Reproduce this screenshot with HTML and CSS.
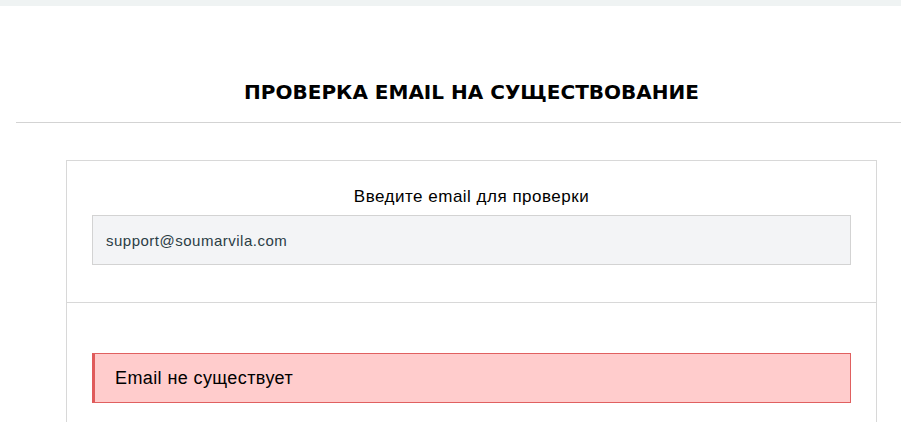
FILE: index.html
```html
<!DOCTYPE html>
<html lang="ru">
<head>
<meta charset="utf-8">
<title>Проверка email</title>
<link rel="stylesheet" href="styles.css">
</head>
<body>
<div class="topbar"></div>
<div class="page">
  <h1 class="title">ПРОВЕРКА EMAIL НА СУЩЕСТВОВАНИЕ</h1>
  <div class="card">
    <div class="card-section form-section">
      <label class="label" for="email">Введите email для проверки</label>
      <input class="input" id="email" type="text" value="support@soumarvila.com">
    </div>
    <div class="card-section result-section">
      <div class="alert">Email не существует</div>
    </div>
  </div>
</div>
</body>
</html>
```

FILE: styles.css
```css
html, body {
  margin: 0;
  padding: 0;
  overflow-x: hidden;
  background: #ffffff;
  font-family: "Liberation Sans", Arial, sans-serif;
}
.topbar {
  height: 6px;
  background: #eff3f3;
}
.page {
  margin-left: 16px;
  width: 911px;
}
.title {
  margin: 0;
  padding-top: 75px;
  padding-bottom: 19px;
  border-bottom: 1px solid #d3d3d3;
  text-align: center;
  font-family: "DejaVu Sans", Verdana, sans-serif;
  font-weight: bold;
  font-size: 20px;
  line-height: 22px;
  color: #000;
}
.card {
  margin: 37px 50px 0;
  border: 1px solid #d8d8d8;
  border-bottom: none;
}
.card-section {
  padding: 0 25px;
}
.form-section {
  padding-top: 25px;
  padding-bottom: 37px;
  border-bottom: 1px solid #d8d8d8;
  display: flex;
  flex-direction: column;
}
.label {
  text-align: center;
  font-size: 17px;
  letter-spacing: 0.5px;
  line-height: 22px;
  color: #000;
  margin-bottom: 7px;
}
.input {
  box-sizing: border-box;
  height: 50px;
  width: 100%;
  margin: 0;
  padding: 0 13px;
  border: 1px solid #d3d3d3;
  background: #f3f4f6;
  font-family: "Liberation Sans", Arial, sans-serif;
  font-size: 15px;
  letter-spacing: 0.5px;
  color: #2b3d45;
  outline: none;
}
.result-section {
  padding-top: 50px;
  padding-bottom: 40px;
}
.alert {
  box-sizing: border-box;
  height: 50px;
  display: flex;
  align-items: center;
  padding-left: 20px;
  background: #ffcccc;
  border: 1px solid #e06060;
  border-left: 3px solid #e05a5a;
  font-size: 18px;
  letter-spacing: 0.4px;
  color: #000;
}
```
